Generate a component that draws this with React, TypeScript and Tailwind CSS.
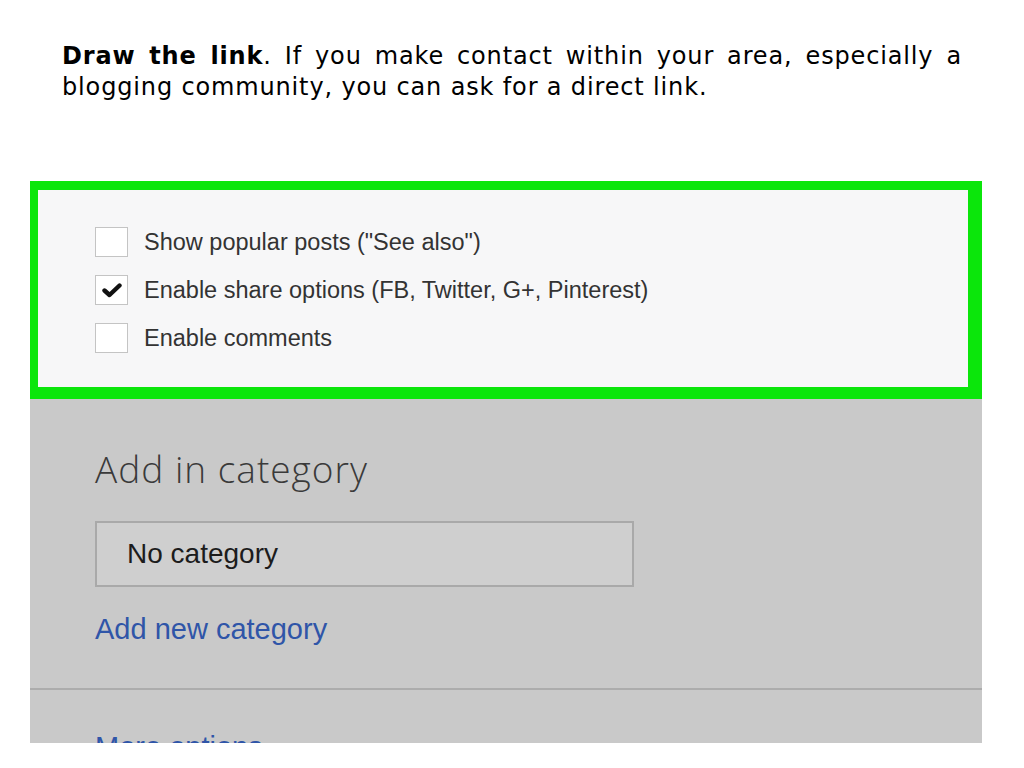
import React from "react";

function Box({ checked }: { checked?: boolean }) {
  return (
    <div className="w-[33px] h-[30px] border border-[#c4c4c4] bg-white flex items-center justify-center shrink-0">
      {checked && (
        <svg width="20" height="16" viewBox="0 0 20 16">
          <path d="M2.5 8.5 L7.5 13 L17.5 3.5" fill="none" stroke="#111" strokeWidth="4.4" strokeLinecap="round" strokeLinejoin="round" />
        </svg>
      )}
    </div>
  );
}

const options = [
  { label: 'Show popular posts ("See also")', checked: false },
  { label: "Enable share options (FB, Twitter, G+, Pinterest)", checked: true },
  { label: "Enable comments", checked: false },
];

export default function App() {
  return (
    <div className="w-[1024px] h-[768px] bg-white overflow-hidden">
      <p className="px-[62px] pt-[41px] text-[24px] leading-[31px] text-black text-justify tracking-[0.85px]" style={{ fontFamily: '"DejaVu Sans", Verdana, sans-serif' }}>
        <b>Draw the link</b>. If you make contact within your area, especially a blogging community, you can ask for a direct link.
      </p>

      <div className="ml-[30px] mt-[78px] w-[952px] h-[562px] overflow-hidden bg-[#c9c9c9]" style={{ fontFamily: '"Liberation Sans", Arial, sans-serif' }}>
        <div className="h-[218px] border-[#0be60b] border-l-[8px] border-t-[9px] border-r-[14px] border-b-[12px] bg-[#f7f7f8] pl-[57px] pt-[37px] flex flex-col gap-[18px]">
          {options.map((o) => (
            <div key={o.label} className="flex items-center gap-[16px]">
              <Box checked={o.checked} />
              <span className="text-[23.5px] leading-[30px] text-[#333]">{o.label}</span>
            </div>
          ))}
        </div>

        <div className="pl-[65px] pt-[48px]">
          <h2 className="text-[37px] leading-[44px] font-light tracking-[1px] text-[#3a3a3a]" style={{ fontFamily: '"Open Sans", "Noto Sans", sans-serif' }}>
            Add in category
          </h2>
          <div className="mt-[30px] w-[539px] h-[66px] border-2 border-[#a9a9a9] bg-[#cfcfcf] flex items-center pl-[30px] text-[28px] text-[#1c1c1c]">
            No category
          </div>
          <div className="mt-[25px] text-[29px] leading-[34px] text-[#2f55a8]">Add new category</div>
        </div>
        <div className="mt-[42px] border-t-2 border-[#acacac]" />
        <div className="pl-[65px] pt-[40px] text-[29px] leading-[34px] text-[#2f55a8]">More options</div>
      </div>
    </div>
  );
}
